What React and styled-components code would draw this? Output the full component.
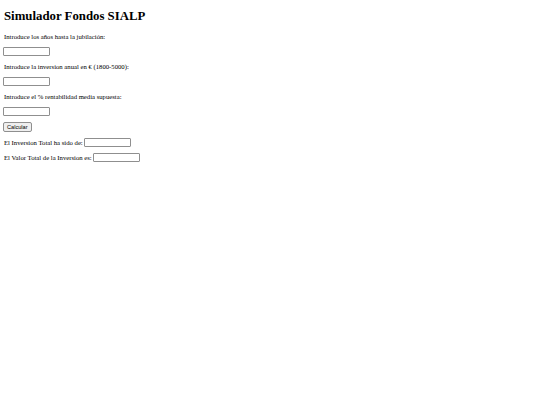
import React from "react";
import styled, { createGlobalStyle } from "styled-components";

const GlobalStyle = createGlobalStyle`
  html, body {
    margin: 0;
    padding: 0;
    background: #ffffff;
  }
  body {
    font-family: "Liberation Serif", "Times New Roman", serif;
    color: #000000;
  }
`;

const Page = styled.div`
  padding: 4px 4px;
  display: flex;
  flex-direction: column;
`;

const Title = styled.h1`
  margin: 4.7px 0 9.8px 0;
  font-size: 12.8px;
  line-height: 14px;
  font-weight: bold;
`;

const Form = styled.div`
  display: flex;
  flex-direction: column;
  align-items: flex-start;
  gap: 6px;
`;

const Label = styled.p`
  margin: 0;
  height: 9px;
  font-size: 6.7px;
  line-height: 9px;
  display: flex;
  align-items: center;
  gap: 1.5px;
`;

const Field = styled.input`
  box-sizing: border-box;
  width: 47px;
  height: 9px;
  margin: 0 0 0 ${(p) => (p.$inline ? "0" : "-1px")};
  padding: 0;
  border: 1px solid #8f8f8f;
  border-radius: 1px;
  background: #ffffff;
`;

const Button = styled.button`
  box-sizing: border-box;
  height: 10px;
  margin-left: -1px;
  padding: 0 3px;
  font-family: "Liberation Sans", Arial, sans-serif;
  font-size: 5.6px;
  line-height: 8px;
  color: #000000;
  background: #efefef;
  border: 1px solid #8f8f8f;
  border-radius: 2px;
`;

export default function App() {
  return (
    <>
      <GlobalStyle />
      <Page>
        <Title>Simulador Fondos SIALP</Title>
        <Form>
          <Label>Introduce los años hasta la jubilación:</Label>
          <Field type="text" />
          <Label>Introduce la inversion anual en € (1800-5000):</Label>
          <Field type="text" />
          <Label>Introduce el % rentabilidad media supuesta:</Label>
          <Field type="text" />
          <Button>Calcular</Button>
          <Label>
            El Inversion Total ha sido de: <Field $inline type="text" readOnly />
          </Label>
          <Label>
            El Valor Total de la Inversion es: <Field $inline type="text" readOnly />
          </Label>
        </Form>
      </Page>
    </>
  );
}
